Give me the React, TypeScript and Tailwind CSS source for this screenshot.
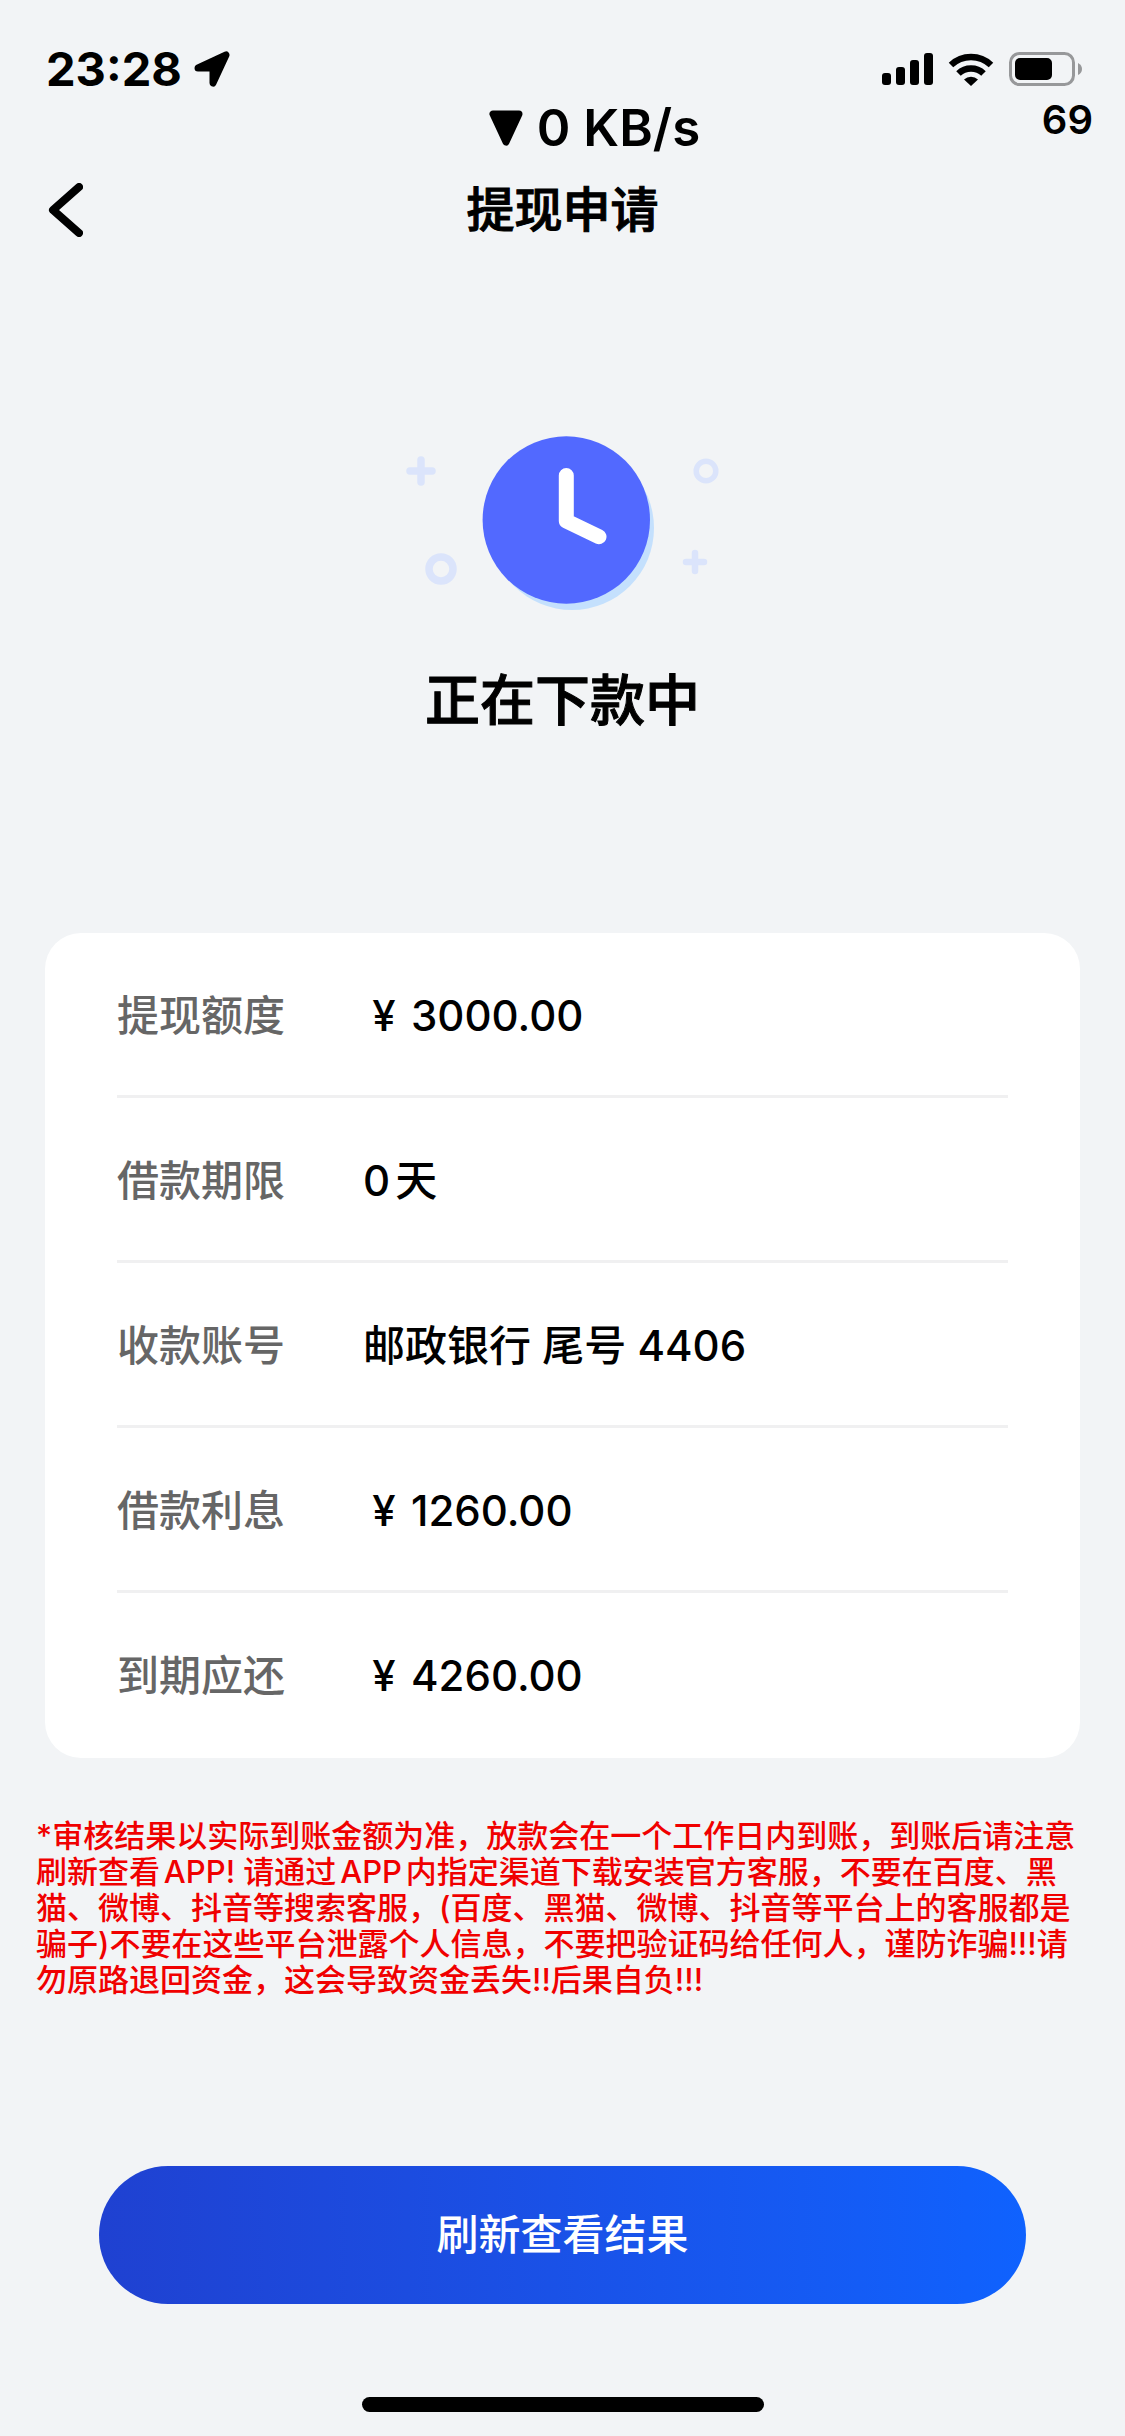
const details = [
  { label: "提现额度", value: "3000.00", money: true },
  { label: "借款期限", value: "0天" },
  { label: "收款账号", value: "邮政银行 尾号 4406" },
  { label: "借款利息", value: "1260.00", money: true },
  { label: "到期应还", value: "4260.00", money: true },
]

const notice = [
  "*审核结果以实际到账金额为准，放款会在一个工作日内到账，到账后请注意",
  "刷新查看APP! 请通过APP内指定渠道下载安装官方客服，不要在百度、黑",
  "猫、微博、抖音等搜索客服，(百度、黑猫、微博、抖音等平台上的客服都是",
  "骗子)不要在这些平台泄露个人信息，不要把验证码给任何人，谨防诈骗!!!请",
  "勿原路退回资金，这会导致资金丢失!!后果自负!!!",
]

function StatusBar() {
  return (
    <div className="grid grid-cols-[1fr_auto_1fr] items-start pt-[42px] pl-[46px] pr-8 h-[165px]">
      <div className="flex items-center gap-3 h-[54px]">
        <span className="text-[47px] leading-[54px] font-bold">23:28</span>
        <svg className="w-9 h-9" viewBox="0 0 36 36">
          <path
            d="M4 17 L32 4 L19 32 V17 Z"
            fill="black"
            stroke="black"
            strokeWidth="7"
            strokeLinejoin="round"
          />
        </svg>
      </div>

      <div className="flex items-center gap-3.5 pl-[50px] pt-14">
        <svg className="w-[34px] h-9" viewBox="0 0 34 36">
          <path d="M4 4 H30 L17 32 Z" fill="black" stroke="black" strokeWidth="7" strokeLinejoin="round" />
        </svg>
        <span className="text-[51px] leading-[60px] font-semibold">0 KB/s</span>
      </div>

      <div className="flex flex-col items-end">
        <div className="flex items-center gap-[15px] h-[54px] pr-[11px]">
          <svg className="w-[51px] h-8" viewBox="0 0 51 32">
            <rect x="0" y="20" width="9" height="12" rx="3" />
            <rect x="14" y="14" width="9" height="18" rx="3" />
            <rect x="28" y="7" width="9" height="25" rx="3" />
            <rect x="42" y="0" width="9" height="32" rx="3" />
          </svg>
          <svg className="w-[46px] h-[33px]" viewBox="0 0 46 33">
            <path d="M3 12 A29 29 0 0 1 43 12" fill="none" stroke="black" strokeWidth="6.5" />
            <path d="M10.5 20.5 A18 18 0 0 1 35.5 20.5" fill="none" stroke="black" strokeWidth="6.5" />
            <path d="M16 26.5 A10.5 10.5 0 0 1 30 26.5 L23 33 Z" />
          </svg>
          <svg className="w-[73px] h-[34px]" viewBox="0 0 73 34">
            <rect x="1.5" y="1.5" width="63" height="31" rx="9" fill="none" stroke="#97989a" strokeWidth="3" />
            <rect x="6" y="6" width="37" height="22" rx="5" />
            <path d="M69 11 Q73 13 73 17 Q73 21 69 23 Z" fill="#97989a" />
          </svg>
        </div>
        <span className="text-[40px] leading-[48px] font-semibold">69</span>
      </div>
    </div>
  )
}

function ClockIcon() {
  return (
    <svg className="w-[314px] h-[174px]" viewBox="1 0 314 174">
      <g fill="none" stroke="#dbe4fb" strokeLinecap="round">
        <path d="M5 35 H27 M16 24 V46" strokeWidth="7.5" />
        <path d="M281 126 H299 M290 117 V135" strokeWidth="6.5" />
        <circle cx="36" cy="133" r="12" strokeWidth="7.5" />
        <circle cx="301" cy="35" r="9.8" strokeWidth="5.5" />
      </g>
      <circle cx="167" cy="92" r="82" fill="#c4e0fd" />
      <circle cx="161.3" cy="84" r="83.7" fill="#5269ff" />
      <path
        d="M161.3 39.5 V85 L194 100.7"
        fill="none"
        stroke="white"
        strokeWidth="15"
        strokeLinecap="round"
        strokeLinejoin="round"
      />
    </svg>
  )
}

export default function App() {
  return (
    <div className="min-h-screen bg-[#f2f4f6] text-black font-['Inter','Noto_Sans_CJK_SC',sans-serif] [text-autospace:normal]">
      <StatusBar />

      <header className="grid grid-cols-[1fr_auto_1fr] items-center h-[90px] px-12">
        <button type="button" aria-label="返回" className="justify-self-start cursor-pointer">
          <svg className="w-[35px] h-[54px]" viewBox="0 0 35 54">
            <path
              d="M31 4 L5 27 L31 50"
              fill="none"
              stroke="black"
              strokeWidth="8"
              strokeLinecap="round"
              strokeLinejoin="round"
            />
          </svg>
        </button>
        <h1 className="text-[48px] leading-[60px] font-medium [-webkit-text-stroke:1px]">提现申请</h1>
      </header>

      <main className="flex flex-col">
        <section className="flex flex-col items-center pt-[181px]">
          <ClockIcon />
          <h2 className="mt-[60px] text-[55px] leading-[60px] font-medium [-webkit-text-stroke:1px]">
            正在下款中
          </h2>
        </section>

        <dl className="mt-[203px] mx-[45px] px-[72px] bg-white rounded-[36px] text-[42px] leading-[60px] font-medium">
          {details.map((item) => (
            <div
              key={item.label}
              className="flex items-center h-[165px] pt-[3px] border-b-3 border-[#f0f0f1] last:border-b-0 last:pt-0"
            >
              <dt className="w-[246px] text-[#666666]">{item.label}</dt>
              <dd>
                {item.money && <span className="inline-block w-[42px] mr-1.5 text-center">¥</span>}
                {item.value}
              </dd>
            </div>
          ))}
        </dl>

        <p className="mt-[60px] ml-9 text-[31px] leading-9 font-medium text-[#f00000]">
          {notice.map((line) => (
            <span key={line} className="block whitespace-nowrap">
              {line}
            </span>
          ))}
        </p>

        <button
          type="button"
          className="mt-[168px] mx-[99px] h-[138px] rounded-full bg-linear-to-r from-[#1f41d1] to-[#0f62fe] text-white text-[42px] leading-[60px] font-medium cursor-pointer"
        >
          刷新查看结果
        </button>
      </main>

      <div className="mt-[93px] pb-6">
        <div className="mx-auto w-[402px] h-[15px] rounded-full bg-black" />
      </div>
    </div>
  )
}
